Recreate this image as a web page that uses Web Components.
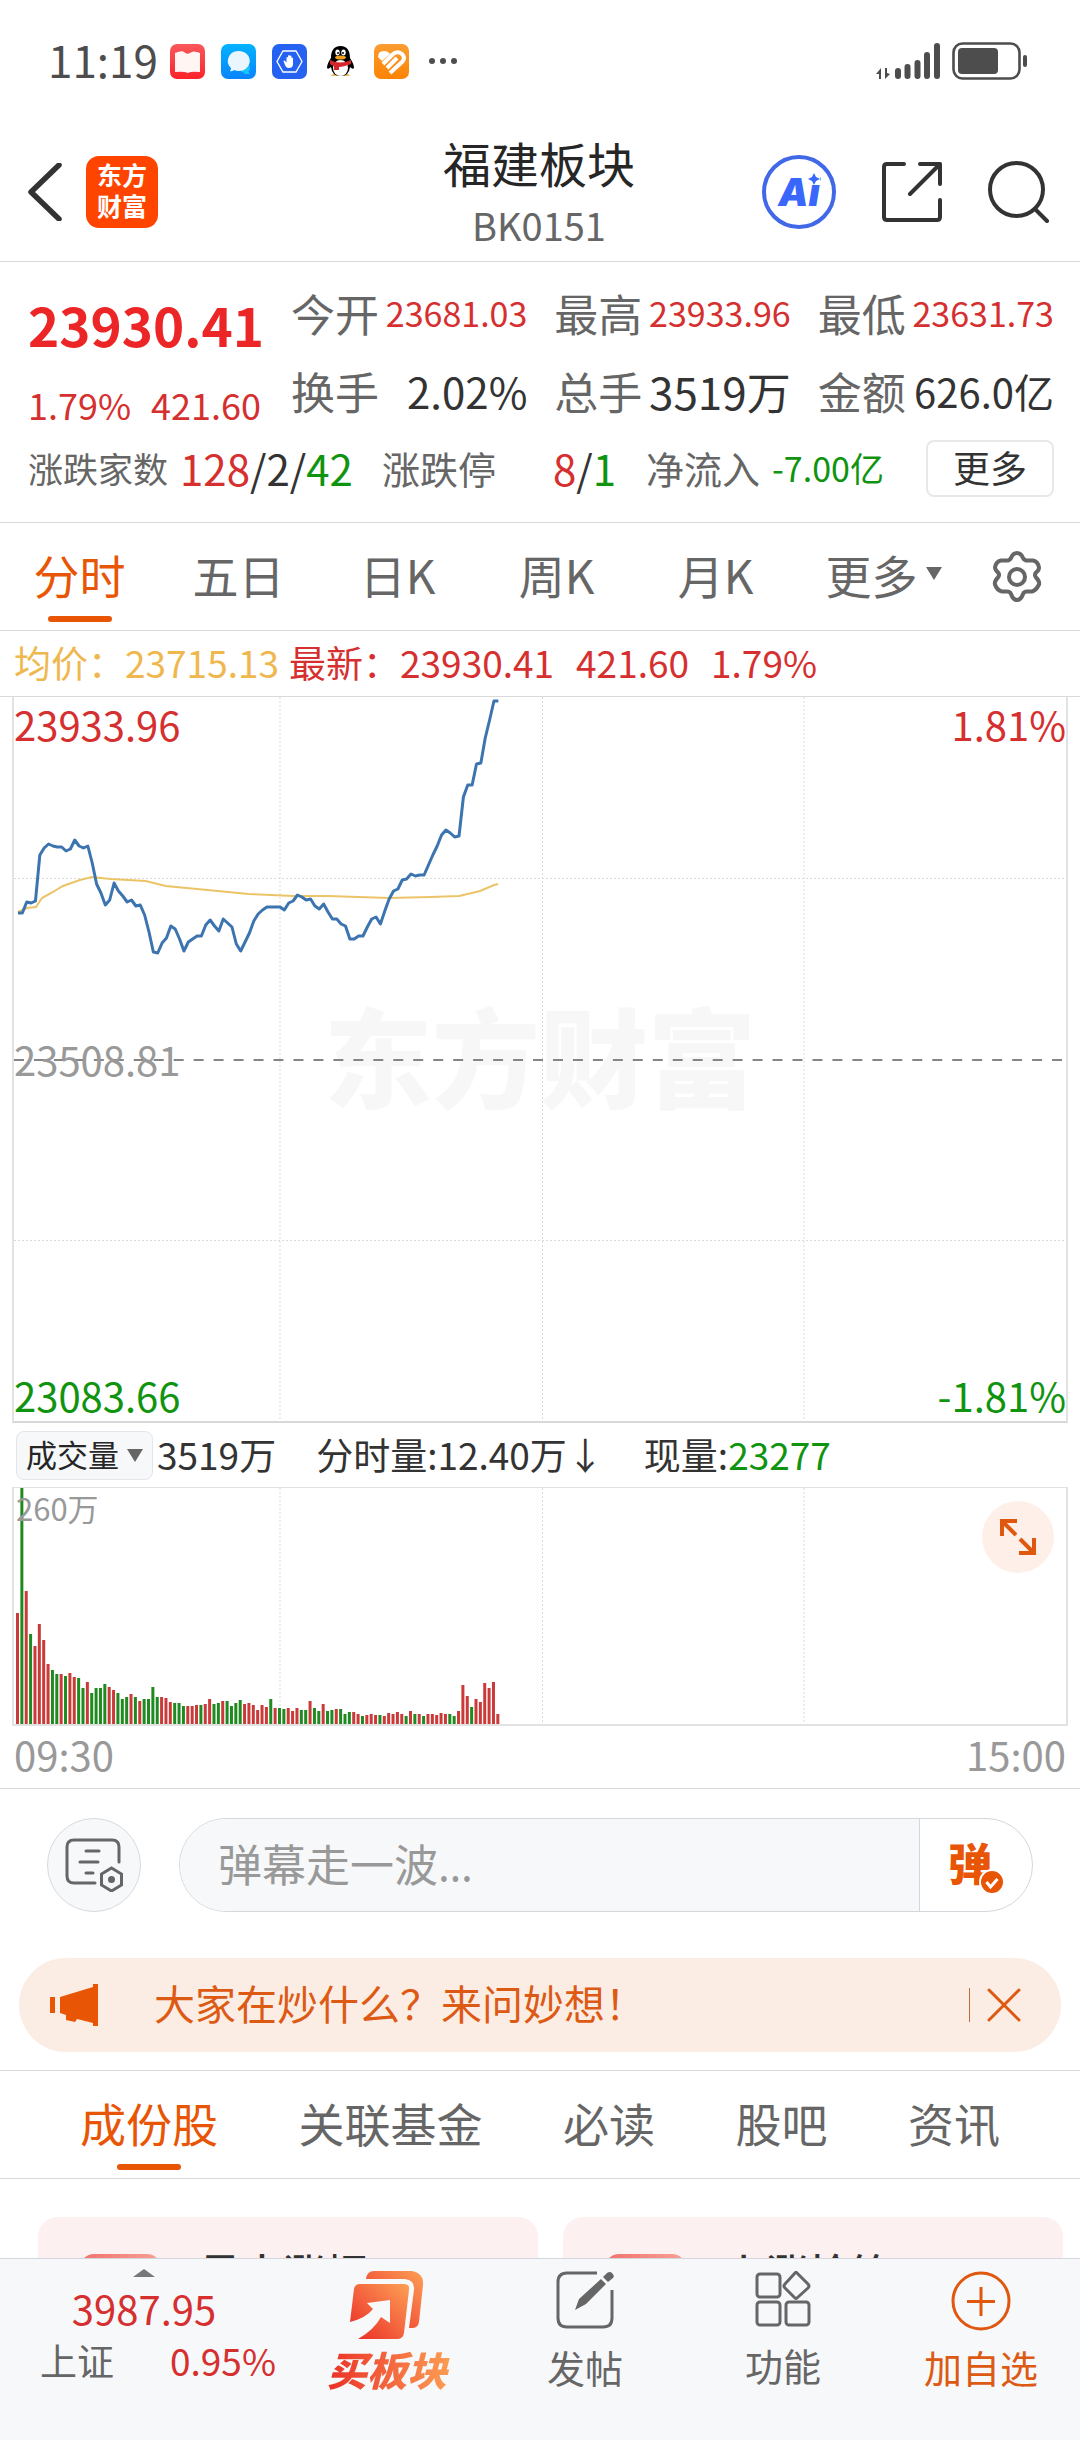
<!DOCTYPE html>
<html lang="zh-CN">
<head>
<meta charset="utf-8">
<meta name="viewport" content="width=device-width, initial-scale=1">
<title>福建板块 BK0151</title>
<style>
  :root {
    --em-orange: #e85505;
    --em-red: #d5302f;
    --em-green: #109410;
    --em-avg: #efb84f;
    --em-text: #333;
    --em-muted: #666;
    --em-faint: #999;
    --em-line: #dadada;
    --em-panel: #f7f8fa;
  }
  body {
    margin: 0;
    background: #fff;
    color: var(--em-text);
    font-family: "Noto Sans CJK SC", "Noto Sans", sans-serif;
  }
</style>
</head>
<body>
<em-app>
  <em-status-bar slot="top" time="11:19"></em-status-bar>
  <em-header slot="top" name="福建板块" code="BK0151"></em-header>
  <em-quote></em-quote>
  <em-period-tabs></em-period-tabs>
  <em-price-chart></em-price-chart>
  <em-volume-chart></em-volume-chart>
  <em-danmu></em-danmu>
  <em-notice>大家在炒什么？来问妙想！</em-notice>
  <em-section-tabs></em-section-tabs>
  <em-cards>
    <em-card>最大涨幅</em-card>
    <em-card>上涨抢筹</em-card>
  </em-cards>
  <em-bottom-bar slot="bottom"></em-bottom-bar>
</em-app>

<script>
const RESET = `
  :host, * { box-sizing: border-box; }
  button, input, select { font: inherit; color: inherit; background: none; border: 0; margin: 0; padding: 0; }
  a { color: inherit; text-decoration: none; }
  .red { color: var(--em-red); }
  .green { color: var(--em-green); }
`;

class EmElement extends HTMLElement {
  constructor() {
    super();
    const template = document.createElement('template');
    template.innerHTML = `<style>${RESET}${this.constructor.css}</style>${this.constructor.html}`;
    this.attachShadow({ mode: 'open' }).appendChild(template.content.cloneNode(true));
  }
  $(sel) {
    return this.shadowRoot.querySelector(sel);
  }
}

// ---- icons ----------------------------------------------------------------

const ICONS = {
  book: ['0 0 35 35', `
    <defs><linearGradient id="g" x2="0" y2="1"><stop stop-color="#f9595b"/><stop offset="1" stop-color="#fb2229"/></linearGradient></defs>
    <rect width="35" height="35" rx="7" fill="url(#g)"/>
    <path d="M5 9q7-3 9-1q3 3 6 1q3-3 10 0v19q-9-1-12 1q-4-2-13-1z" fill="#fff5f3"/>`],
  chat: ['0 0 35 35', `
    <defs><linearGradient id="g" x2="0" y2="1"><stop stop-color="#04b3ff"/><stop offset="1" stop-color="#0a83fb"/></linearGradient></defs>
    <rect width="35" height="35" rx="7" fill="url(#g)"/>
    <circle cx="24" cy="24" r="5" fill="#19c4fa"/><path d="M26 26l3 4h-6z" fill="#19c4fa"/>
    <path d="M17 7a11 10 0 1 1-4 19q-2 2-4 1q1-1 1-3A11 10 0 0 1 17 7z" fill="#e9f6ff"/>`],
  guard: ['0 0 35 35', `
    <rect width="35" height="35" rx="7" fill="#2562f2"/>
    <path d="M11 7h13l6 10.500l-6 10.500H11L5 17.500z" fill="none" stroke="#fff" stroke-width="1.300"/>
    <path d="M11.500 17q1-1 2 .5l1 1v-5q.8-1 1.600 0v3v-5q.9-1 1.700 0v5v-4.500q.8-1 1.600 0V17v-3q.8-1 1.600 0v6q0 4-4 4q-3 0-4-3z" fill="#fff"/>`],
  penguin: ['0 0 35 35', `
    <path d="M8 32h19l-3-3H11z" fill="#e2b45a"/>
    <path d="M17.500 2c-7 0-9.500 5-9.500 12c-2 3-4 6-4 10q1 2 4-1q1 9 9.500 9t9.500-9q3 3 4 1q0-4-4-10c0-7-2.500-12-9.500-12z" fill="#000"/>
    <ellipse cx="17.500" cy="24" rx="7.500" ry="8" fill="#fff"/>
    <ellipse cx="14.500" cy="8.500" rx="2.200" ry="3" fill="#fff"/><ellipse cx="20.500" cy="8.500" rx="2.200" ry="3" fill="#fff"/>
    <circle cx="15" cy="9" r="1"/><circle cx="20" cy="9" r="1"/>
    <ellipse cx="17.500" cy="13.500" rx="5.500" ry="2" fill="#f5a21b"/>
    <path d="M7 16q10 5 21 0v4q-8 3-12 3v3h-5v-4q-3-1-4-2z" fill="#d7262b"/>`],
  heart: ['0 0 35 35', `
    <defs><linearGradient id="g" x2="0" y2="1"><stop stop-color="#fb9d31"/><stop offset="1" stop-color="#fc8304"/></linearGradient></defs>
    <rect width="35" height="35" rx="7" fill="url(#g)"/>
    <path d="M4 13q0-6 6-6q4 0 6 3L8 17z" fill="#fff"/>
    <path d="M9 20l9-9q5-5 10-1q4 4 0 8L16 29M13 24l10-10" fill="none" stroke="#fff" stroke-width="4"/>`],
  signal: ['0 0 64 36', `
    <path d="M0 31l5-6v11H3v-5zM14 31l-5 5V25h2v5z" fill="#4d4d4d"/>
    <g stroke="#4d4d4d" stroke-width="6" stroke-linecap="round"><path d="M22 28v5M31.500 24v9M41.500 20v13M51 12v21M61 3v30"/></g>`],
  battery: ['0 0 76 38', `
    <rect x="1.500" y="1.500" width="66" height="35" rx="9" fill="none" stroke="#4d4d4d" stroke-width="2.600"/>
    <rect x="6" y="6" width="40" height="26" rx="4" fill="#4d4d4d"/><rect x="71" y="13" width="4" height="12" rx="2" fill="#4d4d4d"/>`],
  back: ['0 0 34 58', `<path d="M31 2L3 29l28 27" fill="none" stroke="#333" stroke-width="5.500" stroke-linecap="round" stroke-linejoin="round"/>`],
  share: ['0 0 60 60', `
    <path d="M22 2H5q-3 0-3 3v50q0 3 3 3h50q3 0 3-3V38M38 2h20v20M58 2L28 32" fill="none" stroke="#333" stroke-width="4" stroke-linecap="round" stroke-linejoin="round"/>`],
  search: ['0 0 62 62', `
    <circle cx="28.500" cy="28.500" r="26.500" fill="none" stroke="#333" stroke-width="4"/><path d="M47 48l12 12" stroke="#333" stroke-width="4" stroke-linecap="round"/>`],
  gear: ['0 0 54 54', `
    <g fill="none" stroke="#666" stroke-width="4" stroke-linejoin="round">
    <path d="M27 3q4 0 6 5q1 2 3 2.500l7 0q5 1 6 7q0 3-3 5q-2 2 0 5q4 4 3 7q-3 6-7 7h-5q-3 0-4 2.500q-2 6-6 6t-6-6q-1-2.500-4-2.500h-5q-5-1-7-7q-1-3 3-7q2-3 0-5q-3-3-3-5q1-6 6-7h7q2-.5 3-2.500q2-5 6-5z"/>
    <circle cx="27" cy="27" r="8"/></g>`],
  expand: ['0 0 36 36', `<path d="M2 17V2h15M2 2l14 14M34 19v15H19M34 34L20 20" fill="none" stroke="#e0580f" stroke-width="4"/>`],
  danmuset: ['0 0 58 54', `
    <g fill="none" stroke="#666" stroke-width="3" stroke-linecap="round">
    <path d="M30 45H9q-7 0-7-7V9q0-7 7-7h38q7 0 7 7v15M21 13h13M15 24h18M21 35h7"/></g>
    <path d="M46.500 30l10 6v11l-10 6l-10-6V36z" fill="none" stroke="#666" stroke-width="3"/><circle cx="46.500" cy="41.500" r="3.500" fill="#666"/>`],
  check: ['0 0 26 26', `<circle cx="13" cy="13" r="12" fill="#e85505" stroke="#fff" stroke-width="2"/><path d="M7.500 13l4 5l7-8" fill="none" stroke="#fff" stroke-width="3"/>`],
  horn: ['0 0 48 42', `<path d="M0 13h5v16H0zM10 13L43 3V0h5v42h-5v-3l-16-4l-2 3l-9-2v-5l-6-2z" fill="#e85505"/>`],
  close: ['0 0 34 34', `<path d="M2 2l30 30M32 2L2 32" stroke="#e0580f" stroke-width="3" stroke-linecap="round"/>`],
  buy: ['0 0 74 68', `
    <defs><linearGradient id="g" x1="0" y1="1" x2="1" y2="0"><stop stop-color="#ea2a24"/><stop offset=".5" stop-color="#f4653f"/><stop offset="1" stop-color="#fda055"/></linearGradient></defs>
    <path d="M16 8q1-8 8-8h38q12 2 11 14l-4 37q-1 6-7 6h-3l5-38q1-10-9-11z" fill="url(#g)"/>
    <path d="M4 18q1-5 6-5h44q6 0 5 6l-5 43q-1 6-7 6H8q16-9 23-22l9 6V29l-23 3l6 6q-7 9-23 13z" fill="url(#g)"/>`],
  post: ['0 0 58 58', `
    <path d="M41 2H11q-9 0-9 9v36q0 9 9 9h36q9 0 9-9V19" fill="none" stroke="#666" stroke-width="3"/>
    <path d="M19 39l4-11L45 8l5 5L30 33zM47 6l4-4q3-2 5 0q3 3 1 5l-5 4z" fill="#666"/>`],
  apps: ['0 0 56 56', `
    <g fill="none" stroke="#666" stroke-width="3"><rect x="2" y="3" width="23" height="23" rx="3"/><rect x="2" y="31" width="23" height="23" rx="3"/><rect x="31" y="31" width="23" height="23" rx="3"/>
    <path d="M42 2l11 11q2 2 0 4L42 27q-1 1-2 0L30 17q-2-2 0-4L40 2q1-1 2 0z"/></g>`],
  plus: ['0 0 60 60', `<circle cx="30" cy="30" r="28" fill="none" stroke="#e0580f" stroke-width="3"/><path d="M30 16v29M16 30.500h28" stroke="#e0580f" stroke-width="3"/>`],
  down: ['0 0 16 13', `<path d="M0 0h16L8 13z" fill="#666"/>`],
  up: ['0 0 22 8', `<path d="M0 8h22L11 0z" fill="#777"/>`],
  spark: ['0 0 12 12', `<path d="M6 0l2 4l4 2l-4 2l-2 4l-2-4l-4-2l4-2z" fill="#3a67fb"/>`],
};

class EmIcon extends EmElement {
  static css = `:host { display: block; flex: none; } svg { display: block; }`;
  static html = ``;
  connectedCallback() {
    const [box, body] = ICONS[this.getAttribute('name')];
    const [, , w, h] = box.split(' ');
    const holder = document.createElement('div');
    holder.innerHTML = `<svg viewBox="${box}" width="${w}" height="${h}" aria-hidden="true">${body}</svg>`;
    this.shadowRoot.appendChild(holder.firstChild);
  }
}
customElements.define('em-icon', EmIcon);

// ---- frame ----------------------------------------------------------------

class EmApp extends EmElement {
  static css = `
    :host { display: flex; flex-direction: column; height: 100vh; }
    main { flex: 1; min-height: 0; overflow-y: auto; scrollbar-width: none; }
  `;
  static html = `<slot name="top"></slot><main><slot></slot></main><slot name="bottom"></slot>`;
}
customElements.define('em-app', EmApp);

class EmStatusBar extends EmElement {
  static css = `
    :host { display: flex; align-items: center; justify-content: space-between; height: 122px; padding: 0 52px 0 48px; color: #4d4d4d; }
    .left { display: flex; align-items: center; gap: 16px; }
    .right { display: flex; align-items: center; gap: 12px; }
    time { font-size: 44px; line-height: 52px; padding-bottom: 4px; margin-right: -4px; }
    .dots { display: flex; gap: 5px; margin-left: 4px; }
    .dots i { width: 6px; height: 6px; border-radius: 3px; background: #4d4d4d; }
  `;
  static html = `
    <div class="left">
      <time></time>
      <em-icon name="book"></em-icon><em-icon name="chat"></em-icon><em-icon name="guard"></em-icon>
      <em-icon name="penguin"></em-icon><em-icon name="heart"></em-icon>
      <span class="dots"><i></i><i></i><i></i></span>
    </div>
    <div class="right"><em-icon name="signal"></em-icon><em-icon name="battery"></em-icon></div>`;
  connectedCallback() {
    this.$('time').textContent = this.getAttribute('time');
  }
}
customElements.define('em-status-bar', EmStatusBar);

class EmHeader extends EmElement {
  static css = `
    :host { display: grid; grid-template-columns: 1fr auto 1fr; align-items: center; height: 140px; padding: 0 30px 0 28px; border-bottom: 1px solid var(--em-line); }
    .left, .right { display: flex; align-items: center; }
    .left { gap: 24px; }
    .right { justify-content: flex-end; gap: 46px; }
    .logo { display: grid; place-content: center; width: 72px; height: 72px; border-radius: 13px; background: #ff4400; color: #fff; font-size: 25px; line-height: 31px; font-weight: 700; padding-bottom: 4px; }
    .logo span { width: 50px; }
    .title { display: grid; gap: 6px; text-align: center; }
    h1 { margin: 0; font-size: 48px; line-height: 60px; font-weight: 400; color: #262626; }
    p { margin: 0; font-size: 38px; line-height: 54px; color: var(--em-muted); }
    .ai { position: relative; width: 74px; height: 74px; border: 4px solid #4168e6; border-radius: 50%; color: #3a67fb; font: italic 900 38px/60px Inter, sans-serif; }
    .ai em-icon { position: absolute; right: 12px; top: 14px; background: #fff; }
  `;
  static html = `
    <div class="left">
      <button aria-label="返回"><em-icon name="back"></em-icon></button>
      <a class="logo" href="#home"><span>东方财富</span></a>
    </div>
    <div class="title"><h1></h1><p></p></div>
    <div class="right">
      <button class="ai">Ai<em-icon name="spark"></em-icon></button>
      <button aria-label="分享"><em-icon name="share"></em-icon></button>
      <button aria-label="搜索"><em-icon name="search"></em-icon></button>
    </div>`;
  connectedCallback() {
    this.$('h1').textContent = this.getAttribute('name');
    this.$('p').textContent = this.getAttribute('code');
  }
}
customElements.define('em-header', EmHeader);

// ---- quote ----------------------------------------------------------------

class EmStat extends EmElement {
  static css = `
    :host { display: flex; align-items: center; justify-content: space-between; font-size: 42px; line-height: 52px; white-space: nowrap; }
    span { font-size: 44px; color: var(--em-muted); }
    :host([size="s"]) { font-size: 34px; }
    :host([size="m"]) { font-size: 40px; }
    :host([size="l"]) { font-size: 44px; }
  `;
  static html = `<span></span><slot></slot>`;
  connectedCallback() {
    this.$('span').textContent = this.getAttribute('label');
  }
}
customElements.define('em-stat', EmStat);

class EmQuote extends EmElement {
  static css = `
    :host { display: block; padding: 12px 26px 12px 28px; border-bottom: 1px solid var(--em-line); white-space: nowrap; }
    .top { display: grid; grid-template-columns: 263px 1fr; }
    .price { display: flex; flex-direction: column; gap: 26px; padding-top: 18px; }
    .price strong { font-size: 53px; line-height: 64px; color: #ec2527; }
    .price div { display: flex; gap: 20px; font-size: 36px; line-height: 44px; }
    .stats { display: grid; grid-template-columns: repeat(3, 1fr); grid-auto-rows: 78px; column-gap: 27px; }
    .foot { display: grid; grid-template-columns: 354px 264px 1fr 128px; align-items: center; height: 80px; padding-bottom: 4px; font-size: 42px; line-height: 52px; }
    .foot > span { display: flex; align-items: center; gap: 12px; }
    .foot .limit { justify-content: space-between; padding-right: 30px; }
    .foot small { font-size: 38px; color: var(--em-muted); }
    .foot small.s { font-size: 35px; }
    .foot b { font-weight: 400; }
    .foot .flow { font-size: 34px; }
    button { height: 57px; border: 2px solid #e8e8e8; border-radius: 8px; font-size: 37px; line-height: 50px; padding-bottom: 2px; }
  `;
  static html = `
    <div class="top">
      <div class="price">
        <strong>23930.41</strong>
        <div class="red"><span>1.79%</span><span>421.60</span></div>
      </div>
      <div class="stats">
        <em-stat label="今开" size="s"><span class="red">23681.03</span></em-stat>
        <em-stat label="最高" size="s"><span class="red">23933.96</span></em-stat>
        <em-stat label="最低" size="s"><span class="red">23631.73</span></em-stat>
        <em-stat label="换手">2.02%</em-stat>
        <em-stat label="总手" size="l">3519万</em-stat>
        <em-stat label="金额" size="m">626.0亿</em-stat>
      </div>
    </div>
    <div class="foot">
      <span><small class="s">涨跌家数</small><b><span class="red">128</span>/2/<span class="green">42</span></b></span>
      <span class="limit"><small>涨跌停</small><b><span class="red">8</span>/<span class="green">1</span></b></span>
      <span class="flow"><small>净流入</small><span class="green">-7.00亿</span></span>
      <button>更多</button>
    </div>`;
}
customElements.define('em-quote', EmQuote);

// ---- tabs -----------------------------------------------------------------

const TAB_CSS = `
  button { position: relative; display: flex; align-items: center; justify-content: center; gap: 8px; height: 100%; padding-bottom: 6px; color: var(--em-muted); white-space: nowrap; }
  button[aria-selected="true"] { color: var(--em-orange); }
  button[aria-selected="true"]::after { content: ""; position: absolute; left: 50%; bottom: 8px; width: 64px; height: 6px; margin-left: -32px; border-radius: 3px; background: var(--em-orange); }
`;

class EmPeriodTabs extends EmElement {
  static css = `
    :host { display: block; border-bottom: 1px solid var(--em-line); }
    div { display: grid; grid-template-columns: repeat(6, 159fr) 126fr; height: 107px; font-size: 46px; line-height: 56px; }
    ${TAB_CSS}
    .more { padding-left: 18px; }
    .gear { padding-bottom: 0; }
  `;
  static html = `
    <div role="tablist">
      <button role="tab" aria-selected="true">分时</button>
      <button role="tab">五日</button>
      <button role="tab">日K</button>
      <button role="tab">周K</button>
      <button role="tab">月K</button>
      <button role="tab" class="more">更多<em-icon name="down"></em-icon></button>
      <button class="gear" aria-label="设置"><em-icon name="gear"></em-icon></button>
    </div>`;
}
customElements.define('em-period-tabs', EmPeriodTabs);

class EmSectionTabs extends EmElement {
  static css = `
    :host { display: block; margin-top: 18px; border: solid var(--em-line); border-width: 1px 0; }
    div { display: flex; justify-content: space-between; height: 107px; padding: 0 80px; font-size: 46px; line-height: 56px; }
    ${TAB_CSS}
  `;
  static html = `
    <div role="tablist">
      <button role="tab" aria-selected="true">成份股</button>
      <button role="tab">关联基金</button>
      <button role="tab">必读</button>
      <button role="tab">股吧</button>
      <button role="tab">资讯</button>
    </div>`;
}
customElements.define('em-section-tabs', EmSectionTabs);

// ---- charts ---------------------------------------------------------------

const SLOT = 4.375; // width of one trading minute
const PRICE = [
  216, 216, 205, 206, 204, 158, 151, 147, 149, 150, 150, 154, 152, 143, 149, 151, 149, 166, 187, 196,
  208, 203, 186, 194, 199, 205, 203, 209, 208, 218, 235, 255, 256, 246, 241, 229, 232, 242, 254, 245,
  242, 239, 239, 228, 223, 229, 234, 222, 226, 230, 247, 254, 245, 236, 224, 217, 213, 210, 210, 210,
  210, 213, 206, 204, 198, 200, 203, 202, 209, 212, 207, 215, 222, 222, 227, 229, 242, 242, 239, 239,
  230, 222, 220, 227, 214, 202, 194, 192, 183, 182, 177, 179, 178, 178, 168, 158, 149, 138, 133, 136,
  140, 139, 100, 88, 88, 67, 66, 41, 23, 4, 4,
];
const AVERAGE = '4,215 13,211 22,210 28,201 39,195 49,189 66,183 78,180 87,181 97,182 132,184 152,189 194,193 235,197 280,199 314,199 376,201 417,200 446,199 467,194 481,188 485,187';
const VOLUME = `
  r111 g237 r133 g90 r78 r100 r84 r60 g54 g50 r50 g48 r51 r47 g46 g36 r42 g31 g36 g36 g40 r37 r34 g31 g25 g27 r30 g27
  r23 g25 g25 g37 g27 r27 r26 r22 g21 g21 g18 r18 r18 r19 g19 r20 r25 g20 g21 r23 g23 g18 g21 g24 r20 r21 r19 r14
  r19 r17 g25 r16 g16 g15 r16 r13 r16 g14 g14 r23 g16 g13 r20 g13 g14 r15 g15 g10 g12 r12 r10 g8 r9 r10 r9 g9
  r8 r11 r10 r12 r10 g8 r13 g10 r10 g8 r10 r10 r9 r11 r10 g10 g8 r13 r39 r28 g17 r25 r22 r41 r36 r42 r10`.trim().split(/\s+/);

function gridLines(height, rows) {
  const cols = [266.5, 529.5, 791.5].map((x) => `M${x} 0V${height}`);
  return `<path d="${cols.join('')}${rows.map((y) => `M0 ${y}H1054`).join('')}" stroke="#dadada" stroke-dasharray="2 2" fill="none" vector-effect="non-scaling-stroke"/>`;
}

class EmPriceChart extends EmElement {
  static css = `
    :host { display: block; }
    .legend { display: flex; align-items: center; gap: 22px; height: 66px; padding: 0 14px 4px; border-bottom: 1px solid var(--em-line); font-size: 37px; line-height: 48px; white-space: nowrap; }
    .legend .avg { color: var(--em-avg); margin-right: -12px; }
    .plot { display: grid; grid-template-columns: 1fr auto; height: 726px; margin: 0 12px; border: 2px solid #e2e2e2; border-top: 0; border-bottom-color: #d8d8d8; font-size: 40px; line-height: 44px; }
    .plot > * { grid-row: 1; }
    .mark { grid-column: 1 / 3; place-self: center; font-size: 108px; line-height: 120px; font-weight: 900; color: #f7f7f7; padding-bottom: 12px; }
    svg { grid-column: 1 / 3; width: 100%; height: 724px; display: block; }
    .plot .l { grid-column: 1; justify-self: start; }
    .plot .r { grid-column: 2; justify-self: end; }
    .hi { align-self: start; padding-top: 5px; }
    .mid { align-self: center; color: var(--em-faint); }
    .lo { align-self: end; padding-bottom: 4px; }
  `;
  static html = `
    <div class="legend">
      <span class="avg">均价：23715.13</span>
      <span class="red">最新：23930.41</span><span class="red">421.60</span><span class="red">1.79%</span>
    </div>
    <div class="plot">
      <span class="mark">东方财富</span>
      <svg viewBox="0 0 1054 724" preserveAspectRatio="none" role="img" aria-label="分时走势"></svg>
      <span class="l hi red">23933.96</span><span class="r hi red">1.81%</span>
      <span class="l mid">23508.81</span>
      <span class="l lo green">23083.66</span><span class="r lo green">-1.81%</span>
    </div>`;
  connectedCallback() {
    const points = PRICE.map((y, i) => `${4 + i * SLOT},${y}`).join(' ');
    this.$('svg').innerHTML = `
      ${gridLines(724, [181.5, 543.5])}
      <path d="M0 363H1054" stroke="#858585" stroke-width="2" stroke-dasharray="10 10"/>
      <polyline points="${AVERAGE}" fill="none" stroke="#ecc468" stroke-width="2"/>
      <polyline points="${points}" fill="none" stroke="#3c74b0" stroke-width="3" stroke-linejoin="round"/>`;
  }
}
customElements.define('em-price-chart', EmPriceChart);

class EmVolumeChart extends EmElement {
  static css = `
    :host { display: block; border-bottom: 1px solid var(--em-line); }
    .legend { display: flex; align-items: center; height: 64px; padding: 0 16px; font-size: 37px; line-height: 48px; white-space: nowrap; }
    .legend > span { margin-right: 40px; padding-bottom: 2px; }
    .pick { display: grid; grid-template-columns: 1fr auto; align-items: center; width: 137px; height: 49px; margin-right: 4px; padding: 0 9px; border: 1px solid #e3e5ea; border-radius: 8px; background: var(--em-panel); }
    select { grid-area: 1 / 1 / 2 / 3; appearance: none; font-size: 31px; line-height: 44px; padding-bottom: 3px; color: #262626; }
    .pick em-icon { grid-area: 1 / 2; pointer-events: none; }
    .plot { position: relative; height: 239px; margin: 0 12px; border: 2px solid #e2e2e2; border-top-width: 1px; }
    svg { display: block; width: 100%; height: 236px; }
    .max { position: absolute; left: 2px; top: 0; font-size: 31px; line-height: 40px; color: var(--em-faint); }
    .plot button { position: absolute; right: 12px; top: 13px; display: grid; place-content: center; width: 72px; height: 72px; border-radius: 50%; background: #fef0e9; }
    .axis { display: flex; justify-content: space-between; padding: 4px 14px 10px; font-size: 40px; line-height: 48px; color: var(--em-faint); }
  `;
  static html = `
    <div class="legend">
      <label class="pick"><select aria-label="指标"><option>成交量</option></select><em-icon name="down"></em-icon></label>
      <span>3519万</span><span>分时量:12.40万↓</span><span>现量:<span class="green">23277</span></span>
    </div>
    <div class="plot">
      <svg viewBox="0 0 1054 236" preserveAspectRatio="none" role="img" aria-label="成交量"></svg>
      <span class="max">260万</span>
      <button aria-label="全屏"><em-icon name="expand"></em-icon></button>
    </div>
    <div class="axis"><span>09:30</span><span>15:00</span></div>`;
  connectedCallback() {
    const bars = VOLUME.map((v, i) => {
      const h = +v.slice(1);
      return `<rect x="${2 + i * SLOT}" y="${236 - h}" width="3" height="${h}" fill="${v[0] === 'r' ? '#c93a38' : '#1f8a1f'}"/>`;
    });
    this.$('svg').innerHTML = gridLines(236, []) + bars.join('');
  }
}
customElements.define('em-volume-chart', EmVolumeChart);

// ---- danmu, notice, cards -------------------------------------------------

class EmDanmu extends EmElement {
  static css = `
    :host { display: flex; gap: 38px; padding: 29px 47px 46px; }
    .set { display: grid; place-content: center; width: 94px; height: 94px; border: 1px solid #d8dae0; border-radius: 50%; background: var(--em-panel); }
    .box { flex: 1; display: flex; height: 94px; border: 1px solid #d4d7dc; border-radius: 47px; overflow: hidden; }
    input { flex: 1; min-width: 0; padding: 0 38px; background: var(--em-panel); font: 44px/60px "Noto Sans", "Noto Sans CJK SC", sans-serif; }
    input::placeholder { color: var(--em-faint); opacity: 1; }
    .send { position: relative; width: 113px; padding: 0 12px 6px 0; border-left: 1px solid #d4d7dc; color: var(--em-orange); font-size: 44px; font-weight: 900; }
    .send em-icon { position: absolute; left: 59px; bottom: 16px; }
  `;
  static html = `
    <button class="set" aria-label="弹幕设置"><em-icon name="danmuset"></em-icon></button>
    <div class="box">
      <input type="text" aria-label="弹幕" placeholder="弹幕走一波…">
      <button class="send">弹<em-icon name="check"></em-icon></button>
    </div>`;
}
customElements.define('em-danmu', EmDanmu);

class EmNotice extends EmElement {
  static css = `
    :host { display: flex; align-items: center; height: 94px; margin: 0 19px; padding: 0 40px 0 31px; border-radius: 47px; background: #fcede4; color: #dc5a14; }
    a { flex: 1; margin-left: 56px; font-size: 41px; line-height: 52px; padding-bottom: 6px; }
    button { padding-left: 17px; border-left: 1px solid #c06a3a; }
  `;
  static html = `<em-icon name="horn"></em-icon><a href="#ask"><slot></slot></a><button aria-label="关闭"><em-icon name="close"></em-icon></button>`;
}
customElements.define('em-notice', EmNotice);

class EmCards extends EmElement {
  static css = `:host { display: grid; grid-template-columns: 1fr 1fr; gap: 25px; padding: 38px 17px 38px 38px; }`;
  static html = `<slot></slot>`;
}
customElements.define('em-cards', EmCards);

class EmCard extends EmElement {
  static css = `
    :host { display: flex; gap: 38px; padding: 37px 42px; height: 160px; border-radius: 20px; background: #fdf0f0; font-size: 42px; line-height: 52px; font-weight: 500; }
    i { width: 81px; height: 81px; border-radius: 14px; background: linear-gradient(90deg, #f1716d, #f7a294); }
    span { margin-top: -8px; }
  `;
  static html = `<i></i><span><slot></slot></span>`;
}
customElements.define('em-card', EmCard);

class EmBottomBar extends EmElement {
  static css = `
    :host { display: grid; grid-template-columns: 288fr repeat(4, 198fr); height: 182px; border-top: 1px solid #d3d6dc; background: var(--em-panel); white-space: nowrap; }
    a, button { display: flex; flex-direction: column; align-items: center; color: var(--em-muted); }
    .index { padding-top: 10px; }
    .index b { font-size: 40px; line-height: 48px; font-weight: 400; padding-top: 7px; }
    .index div { display: flex; gap: 56px; padding: 4px 0 0 28px; font-size: 37px; line-height: 48px; }
    button { justify-content: flex-start; padding-top: 12px; gap: 12px; font-size: 38px; line-height: 52px; }
    .buy { gap: 4px; }
    .buy span { font-size: 40px; font-weight: 900; font-style: italic; background: linear-gradient(90deg, #ea2a24, #fda055); background-clip: text; color: transparent; padding: 0 6px; }
    .add { color: #dc5a14; gap: 10px; }
  `;
  static html = `
    <a class="index" href="#index">
      <em-icon name="up"></em-icon>
      <b class="red">3987.95</b>
      <div><span>上证</span><span class="red">0.95%</span></div>
    </a>
    <button class="buy"><em-icon name="buy"></em-icon><span>买板块</span></button>
    <button><em-icon name="post"></em-icon><span>发帖</span></button>
    <button><em-icon name="apps"></em-icon><span>功能</span></button>
    <button class="add"><em-icon name="plus"></em-icon><span>加自选</span></button>`;
}
customElements.define('em-bottom-bar', EmBottomBar);
</script>
</body>
</html>
